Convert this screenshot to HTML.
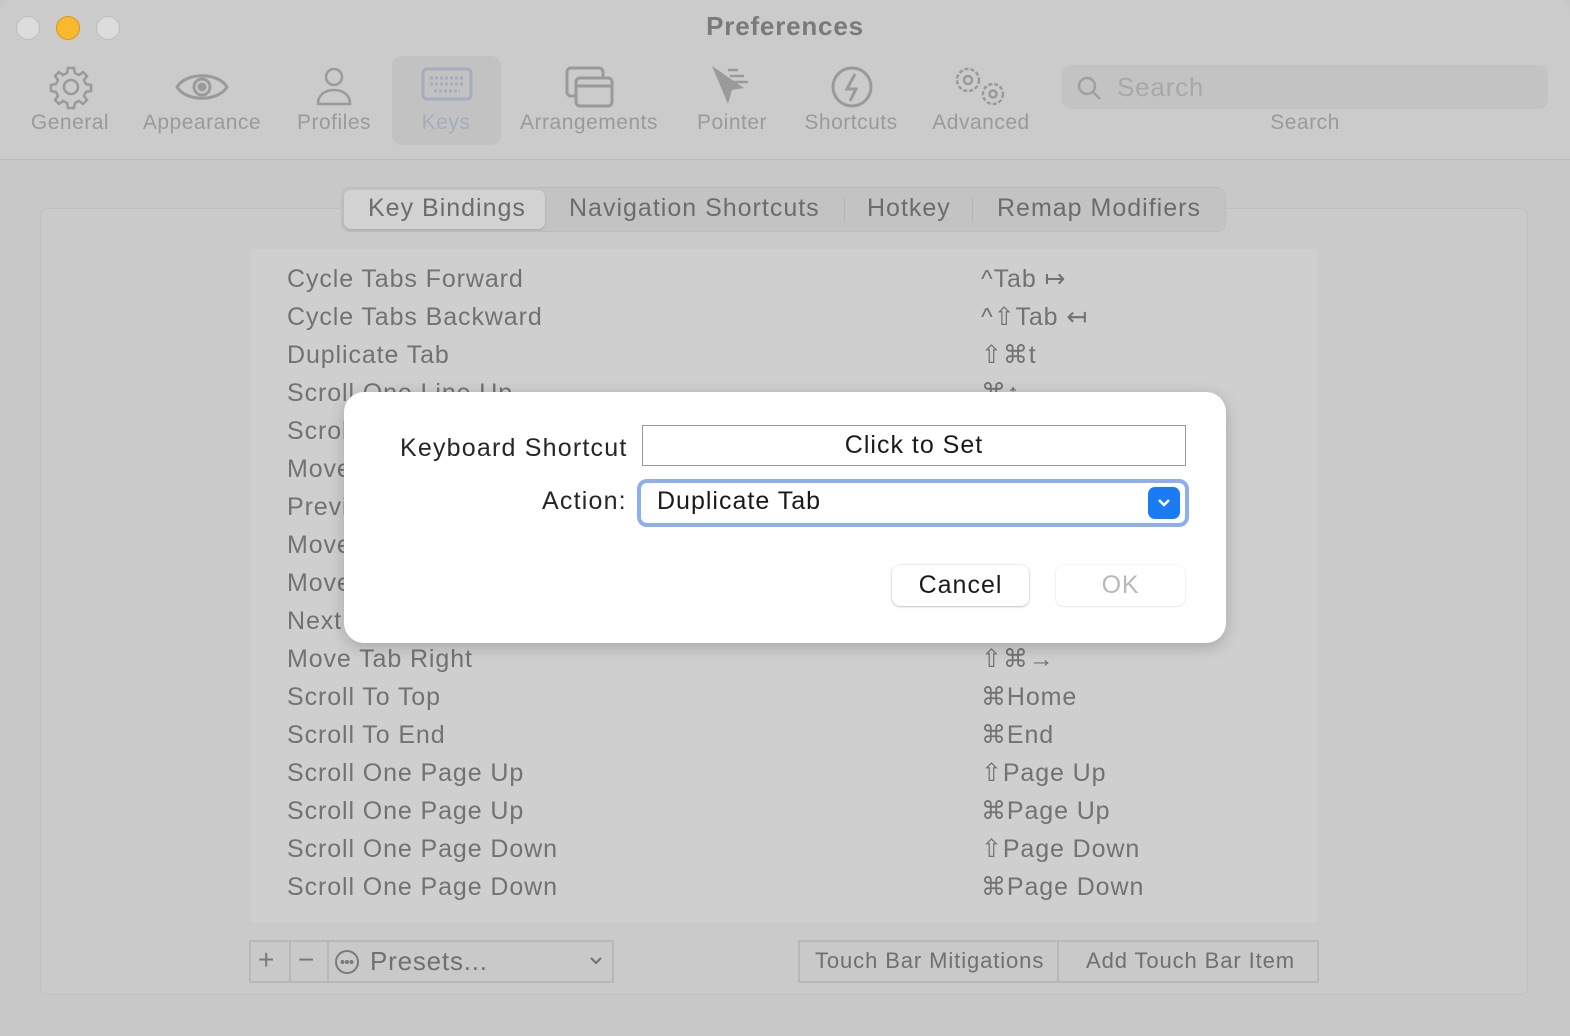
<!DOCTYPE html>
<html><head><meta charset="utf-8"><style>
*{box-sizing:border-box;margin:0;padding:0}
body{width:1570px;height:1036px;background:#c8c8c8;font-family:"Liberation Sans",sans-serif;position:relative;overflow:hidden;color:#707070;letter-spacing:0.8px}
.abs{position:absolute}
.dot{position:absolute;top:16px;width:24px;height:24px;border-radius:50%;background:#dcdcdc;border:1px solid #bdbdbd}
.tb{position:absolute;top:111px;font-size:21px;color:#9a9a9a;text-align:center;letter-spacing:0.5px;white-space:nowrap}
.ic{position:absolute;top:64px}
.row{position:absolute;left:287px;font-size:25px;color:#727272;height:38px;line-height:38px;letter-spacing:0.9px}
.key{position:absolute;left:981px;font-size:25px;color:#727272;height:38px;line-height:38px;letter-spacing:0.9px}
.tab{position:absolute;top:194px;font-size:25px;color:#6c6c6c;letter-spacing:1px}
</style></head><body>
<div class="abs" style="left:0;top:0;width:1570px;height:160px;background:#cbcbcb;border-bottom:1px solid #b9b9b9;border-radius:12px 12px 0 0"></div>
<div class="dot" style="left:16px"></div>
<div class="dot" style="left:56px;background:#f8b92c;border-color:#d99a1a"></div>
<div class="dot" style="left:96px"></div>
<div class="abs" style="left:0;width:1570px;top:11px;text-align:center;font-size:26px;font-weight:bold;color:#7a7a7a">Preferences</div>

<div class="abs" style="left:392px;top:56px;width:109px;height:89px;background:#c2c2c2;border-radius:10px"></div>
<svg class="ic" style="left:48px" width="46" height="46" viewBox="0 0 46 46" fill="none" stroke="#9a9a9a" stroke-width="2.5"><circle cx="23" cy="23" r="7"/><path d="M20 4h6l1 5 4 2 4-3 4 4-3 4 2 4 5 1v6l-5 1-2 4 3 4-4 4-4-3-4 2-1 5h-6l-1-5-4-2-4 3-4-4 3-4-2-4-5-1v-6l5-1 2-4-3-4 4-4 4 3 4-2z"/></svg>
<svg class="ic" style="left:174px" width="56" height="46" viewBox="0 0 56 46" fill="none" stroke="#9a9a9a" stroke-width="3"><path d="M3 23C12 8 44 8 53 23 44 38 12 38 3 23z"/><circle cx="28" cy="23" r="8"/><circle cx="28" cy="23" r="3" fill="#9a9a9a"/></svg>
<svg class="ic" style="left:314px" width="40" height="46" viewBox="0 0 40 46" fill="none" stroke="#9a9a9a" stroke-width="2.5"><circle cx="20" cy="13" r="8"/><path d="M4 40c0-10 8-14 16-14s16 4 16 14z"/></svg>
<svg class="ic" style="left:420px" width="54" height="40" viewBox="0 0 54 40" fill="none" stroke="#a4acbd" stroke-width="3"><rect x="3" y="5" width="48" height="30" rx="4"/><path d="M10 14h34M10 20h34M14 27h26" stroke-dasharray="3 2"/></svg>
<svg class="ic" style="left:564px" width="52" height="46" viewBox="0 0 52 46" fill="none" stroke="#9a9a9a" stroke-width="3"><rect x="3" y="4" width="36" height="28" rx="4"/><rect x="12" y="14" width="36" height="28" rx="4" fill="#cbcbcb"/><path d="M12 22h36"/></svg>
<svg class="ic" style="left:708px" width="48" height="46" viewBox="0 0 48 46" fill="#9a9a9a"><path d="M4 2l16 38 4-14 12-2z"/><path d="M20 6h10M22 12h14M24 18h16" stroke="#9a9a9a" stroke-width="2.5"/></svg>
<svg class="ic" style="left:830px" width="44" height="46" viewBox="0 0 44 46" fill="none" stroke="#9a9a9a" stroke-width="3"><circle cx="22" cy="23" r="19"/><path d="M25 10l-8 15h9l-6 12" /></svg>
<svg class="ic" style="left:952px" width="58" height="46" viewBox="0 0 58 46" fill="none" stroke="#9a9a9a" stroke-width="2.5"><circle cx="16" cy="16" r="11" stroke-dasharray="4 2"/><circle cx="16" cy="16" r="4"/><circle cx="41" cy="30" r="10" stroke-dasharray="4 2"/><circle cx="41" cy="30" r="3.5"/></svg>
<div class="tb" style="left:20px;width:100px">General</div>
<div class="tb" style="left:136px;width:132px">Appearance</div>
<div class="tb" style="left:290px;width:88px">Profiles</div>
<div class="tb" style="left:400px;width:92px;color:#a4acbd">Keys</div>
<div class="tb" style="left:512px;width:154px">Arrangements</div>
<div class="tb" style="left:690px;width:84px">Pointer</div>
<div class="tb" style="left:798px;width:106px">Shortcuts</div>
<div class="tb" style="left:926px;width:110px">Advanced</div>
<div class="abs" style="left:1062px;top:65px;width:486px;height:44px;background:#c3c3c3;border-radius:9px"></div>
<svg class="abs" style="left:1075px;top:74px" width="28" height="28" viewBox="0 0 28 28" fill="none" stroke="#a0a0a0" stroke-width="2.5"><circle cx="12" cy="12" r="8"/><path d="M18 18l7 7"/></svg>
<div class="abs" style="left:1117px;top:72px;font-size:26px;color:#a8a8a8">Search</div>
<div class="tb" style="left:1255px;width:100px">Search</div>

<div class="abs" style="left:40px;top:208px;width:1488px;height:787px;background:#cacaca;border:1px solid #bfbfbf;border-radius:8px"></div>
<div class="abs" style="left:341px;top:187px;width:885px;height:45px;background:#c3c3c3;border-radius:9px;border:1px solid #bcbcbc"></div>
<div class="abs" style="left:344px;top:190px;width:201px;height:39px;background:#d2d2d2;border-radius:7px;box-shadow:0 1px 2px rgba(0,0,0,.15)"></div>
<div class="abs" style="left:844px;top:198px;width:1px;height:24px;background:#b5b5b5"></div>
<div class="abs" style="left:972px;top:198px;width:1px;height:24px;background:#b5b5b5"></div>
<div class="tab" style="left:368px">Key Bindings</div>
<div class="tab" style="left:569px">Navigation Shortcuts</div>
<div class="tab" style="left:867px">Hotkey</div>
<div class="tab" style="left:997px">Remap Modifiers</div>

<div class="abs" style="left:250px;top:249px;width:1068px;height:673px;background:#cfcfcf"></div>
<div class="row" style="top:260px">Cycle Tabs Forward</div><div class="key" style="top:260px">^Tab ↦</div>
<div class="row" style="top:298px">Cycle Tabs Backward</div><div class="key" style="top:298px">^⇧Tab ↤</div>
<div class="row" style="top:336px">Duplicate Tab</div><div class="key" style="top:336px">⇧⌘t</div>
<div class="row" style="top:374px">Scroll One Line Up</div><div class="key" style="top:374px">⌘↑</div>
<div class="row" style="top:412px">Scroll One Line Down</div>
<div class="row" style="top:450px">Move</div>
<div class="row" style="top:488px">Previous</div>
<div class="row" style="top:526px">Move</div>
<div class="row" style="top:564px">Move</div>
<div class="row" style="top:602px">Next</div>
<div class="row" style="top:640px">Move Tab Right</div><div class="key" style="top:640px">⇧⌘→</div>
<div class="row" style="top:678px">Scroll To Top</div><div class="key" style="top:678px">⌘Home</div>
<div class="row" style="top:716px">Scroll To End</div><div class="key" style="top:716px">⌘End</div>
<div class="row" style="top:754px">Scroll One Page Up</div><div class="key" style="top:754px">⇧Page Up</div>
<div class="row" style="top:792px">Scroll One Page Up</div><div class="key" style="top:792px">⌘Page Up</div>
<div class="row" style="top:830px">Scroll One Page Down</div><div class="key" style="top:830px">⇧Page Down</div>
<div class="row" style="top:868px">Scroll One Page Down</div><div class="key" style="top:868px">⌘Page Down</div>

<div class="abs" style="left:249px;top:940px;width:365px;height:43px;border:2px solid #b8b8b8;background:#c9c9c9"></div>
<div class="abs" style="left:289px;top:941px;width:2px;height:41px;background:#b8b8b8"></div>
<div class="abs" style="left:327px;top:941px;width:2px;height:41px;background:#b8b8b8"></div>
<div class="abs" style="left:258px;top:944px;font-size:28px;color:#7a7a7a">+</div>
<div class="abs" style="left:298px;top:944px;font-size:28px;color:#7a7a7a">−</div>
<svg class="abs" style="left:334px;top:949px" width="26" height="26" viewBox="0 0 26 26" fill="none" stroke="#7a7a7a" stroke-width="2"><circle cx="13" cy="13" r="11"/><circle cx="8.5" cy="13" r="1" fill="#7a7a7a"/><circle cx="13" cy="13" r="1" fill="#7a7a7a"/><circle cx="17.5" cy="13" r="1" fill="#7a7a7a"/></svg>
<div class="abs" style="left:370px;top:946px;font-size:26px;color:#707070">Presets...</div>
<svg class="abs" style="left:588px;top:955px" width="16" height="12" viewBox="0 0 16 12" fill="none" stroke="#707070" stroke-width="2"><path d="M3 3l5 5 5-5"/></svg>
<div class="abs" style="left:798px;top:940px;width:521px;height:43px;border:2px solid #b8b8b8;background:#c9c9c9"></div>
<div class="abs" style="left:1057px;top:941px;width:2px;height:41px;background:#b8b8b8"></div>
<div class="abs" style="left:815px;top:948px;font-size:22px;color:#707070;letter-spacing:0.9px">Touch Bar Mitigations</div>
<div class="abs" style="left:1086px;top:948px;font-size:22px;color:#707070;letter-spacing:0.9px">Add Touch Bar Item</div>

<div class="abs" style="left:344px;top:392px;width:882px;height:251px;background:#fff;border-radius:20px;box-shadow:0 4px 16px rgba(0,0,0,.2)"></div>
<div class="abs" style="left:400px;top:434px;font-size:25px;color:#262626;letter-spacing:1.2px">Keyboard Shortcut</div>
<div class="abs" style="left:642px;top:425px;width:544px;height:41px;border:1px solid #9a9a9a;text-align:center;font-size:25px;line-height:38px;color:#1a1a1a;letter-spacing:1px">Click to Set</div>
<div class="abs" style="left:542px;top:487px;font-size:25px;color:#262626;letter-spacing:1.2px">Action:</div>
<div class="abs" style="left:637px;top:479px;width:552px;height:48px;border:4px solid #8eafef;border-radius:10px;background:#fff"></div>
<div class="abs" style="left:657px;top:487px;font-size:25px;color:#1a1a1a;letter-spacing:1px">Duplicate Tab</div>
<div class="abs" style="left:1148px;top:487px;width:32px;height:32px;background:#1a7cf5;border-radius:7px"></div>
<svg class="abs" style="left:1156px;top:496px" width="16" height="14" viewBox="0 0 16 14" fill="none" stroke="#fff" stroke-width="2.5"><path d="M3 4l5 5 5-5"/></svg>
<div class="abs" style="left:892px;top:565px;width:137px;height:41px;border-radius:8px;background:#fff;box-shadow:0 0.5px 2px rgba(0,0,0,.35);text-align:center;font-size:25px;line-height:40px;color:#1a1a1a;letter-spacing:1px">Cancel</div>
<div class="abs" style="left:1056px;top:565px;width:129px;height:41px;border-radius:8px;background:#fff;box-shadow:0 0.5px 2px rgba(0,0,0,.15);text-align:center;font-size:25px;line-height:40px;color:#b8b8b8">OK</div>
</body></html>
